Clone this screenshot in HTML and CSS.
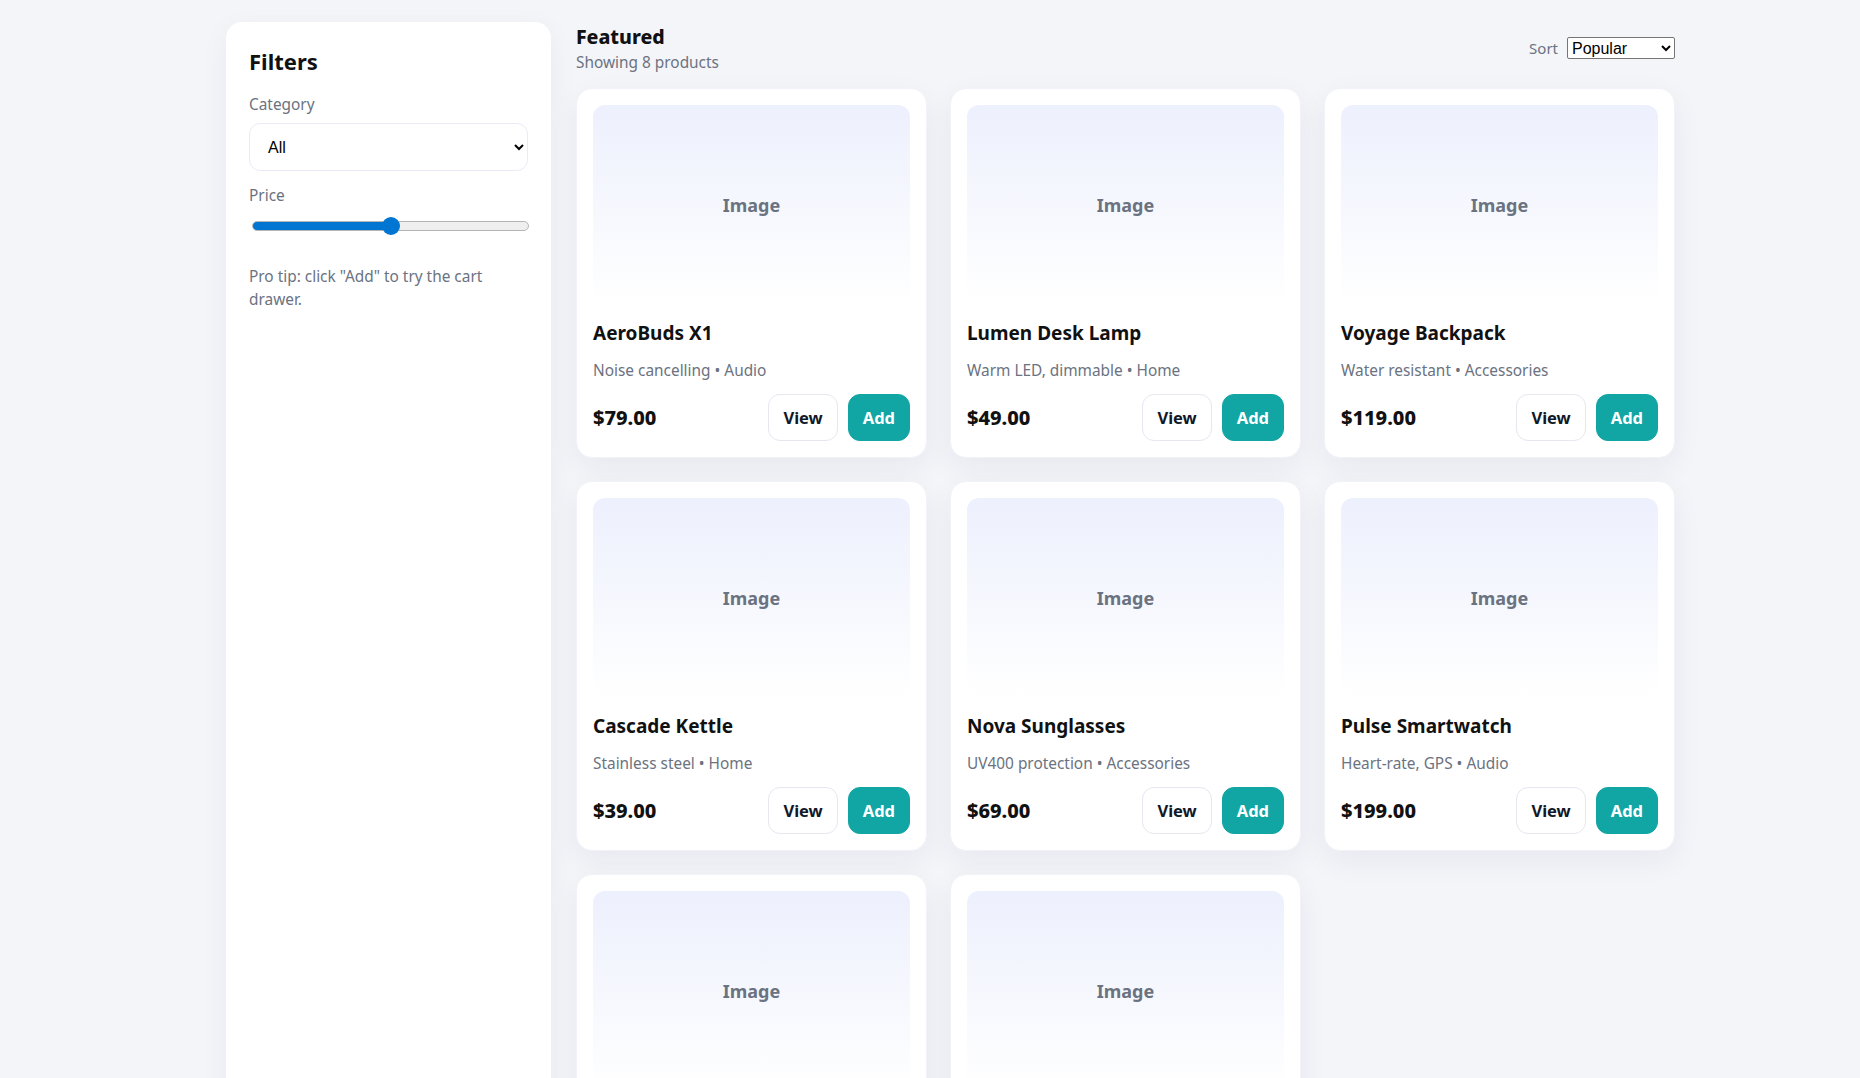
FILE: index.html
```html
<!DOCTYPE html>
<html lang="en">
<head>
<meta charset="utf-8">
<title>Featured products</title>
<link rel="stylesheet" href="styles.css">
</head>
<body>
<div class="page">
  <aside class="filters">
    <h2 class="filters-title">Filters</h2>
    <label class="field-label" for="cat">Category</label>
    <select id="cat" class="cat-select"><option>All</option><option>Audio</option><option>Home</option><option>Accessories</option></select>
    <label class="field-label" for="price">Price</label>
    <input id="price" class="price-range" type="range" min="0" max="100" value="50">
    <p class="tip">Pro tip: click "Add" to try the cart drawer.</p>
  </aside>
  <main class="main">
    <div class="bar">
      <div class="bar-text">
        <h1 class="bar-title">Featured</h1>
        <div class="bar-sub">Showing 8 products</div>
      </div>
      <div class="sort">
        <span class="sort-label">Sort</span>
        <select class="sort-select"><option>Popular</option><option>Newest</option><option>Price</option></select>
      </div>
    </div>
    <div class="grid">
      <article class="card">
        <div class="thumb">Image</div>
        <h3 class="name">AeroBuds X1</h3>
        <p class="meta">Noise cancelling • Audio</p>
        <div class="foot"><span class="price">$79.00</span><div class="actions"><button class="btn btn-view">View</button><button class="btn btn-add">Add</button></div></div>
      </article>
      <article class="card">
        <div class="thumb">Image</div>
        <h3 class="name">Lumen Desk Lamp</h3>
        <p class="meta">Warm LED, dimmable • Home</p>
        <div class="foot"><span class="price">$49.00</span><div class="actions"><button class="btn btn-view">View</button><button class="btn btn-add">Add</button></div></div>
      </article>
      <article class="card">
        <div class="thumb">Image</div>
        <h3 class="name">Voyage Backpack</h3>
        <p class="meta">Water resistant • Accessories</p>
        <div class="foot"><span class="price">$119.00</span><div class="actions"><button class="btn btn-view">View</button><button class="btn btn-add">Add</button></div></div>
      </article>
      <article class="card">
        <div class="thumb">Image</div>
        <h3 class="name">Cascade Kettle</h3>
        <p class="meta">Stainless steel • Home</p>
        <div class="foot"><span class="price">$39.00</span><div class="actions"><button class="btn btn-view">View</button><button class="btn btn-add">Add</button></div></div>
      </article>
      <article class="card">
        <div class="thumb">Image</div>
        <h3 class="name">Nova Sunglasses</h3>
        <p class="meta">UV400 protection • Accessories</p>
        <div class="foot"><span class="price">$69.00</span><div class="actions"><button class="btn btn-view">View</button><button class="btn btn-add">Add</button></div></div>
      </article>
      <article class="card">
        <div class="thumb">Image</div>
        <h3 class="name">Pulse Smartwatch</h3>
        <p class="meta">Heart-rate, GPS • Audio</p>
        <div class="foot"><span class="price">$199.00</span><div class="actions"><button class="btn btn-view">View</button><button class="btn btn-add">Add</button></div></div>
      </article>
      <article class="card">
        <div class="thumb">Image</div>
        <h3 class="name">Terra Planter</h3>
        <p class="meta">Ceramic, drainage • Home</p>
        <div class="foot"><span class="price">$29.00</span><div class="actions"><button class="btn btn-view">View</button><button class="btn btn-add">Add</button></div></div>
      </article>
      <article class="card">
        <div class="thumb">Image</div>
        <h3 class="name">Echo Speaker</h3>
        <p class="meta">Bluetooth 5.3 • Audio</p>
        <div class="foot"><span class="price">$89.00</span><div class="actions"><button class="btn btn-view">View</button><button class="btn btn-add">Add</button></div></div>
      </article>
    </div>
  </main>
</div>
</body>
</html>
```
FILE: styles.css
```css
* { box-sizing: border-box; }
html, body { margin: 0; padding: 0; }
body {
  background: #f4f5f9;
  font-family: "Noto Sans", "Open Sans", sans-serif;
  color: #111;
}
.page {
  display: grid;
  grid-template-columns: 325px 1fr;
  gap: 25px;
  padding: 22px 185px 40px 226px;
}
.filters {
  background: #fff;
  border-radius: 16px;
  padding: 24px 23px;
  box-shadow: 0 8px 30px rgba(20, 30, 60, 0.05);
}
.filters-title {
  margin: 0 0 18px;
  font-size: 22px;
  line-height: 30px;
  font-weight: 700;
}
.field-label {
  display: block;
  font-size: 15.4px;
  line-height: 22px;
  color: #6b7280;
  margin-bottom: 7px;
}
.cat-select {
  display: block;
  width: 100%;
  height: 48px;
  border: 1px solid #ebebf7;
  border-radius: 11px;
  background: #fff;
  padding: 0 12px 0 14px;
  font-family: "Liberation Sans", Arial, sans-serif;
  font-size: 16px;
  color: #000;
  margin-bottom: 14px;
}
.price-range {
  -webkit-appearance: none;
  appearance: none;
  display: block;
  width: calc(100% - 2px);
  height: 18px;
  margin: 10px 0 0 3px;
  background: transparent;
}
.price-range::-webkit-slider-runnable-track {
  height: 10px;
  border-radius: 5px;
  border: 1px solid #b5b5b5;
  background: linear-gradient(90deg, #0075d2 0 50%, #efefef 50% 100%);
}
.price-range::-webkit-slider-thumb {
  -webkit-appearance: none;
  appearance: none;
  width: 18px;
  height: 18px;
  margin-top: -5px;
  border-radius: 50%;
  border: 0;
  background: #0075d2;
}
.tip {
  margin: 30px 0 0;
  font-size: 15.4px;
  line-height: 23px;
  color: #6b7280;
}
.main { min-width: 0; }
.bar {
  display: flex;
  align-items: center;
  justify-content: space-between;
  padding-top: 3px;
  margin-bottom: 13px;
}
.bar-title {
  margin: 0;
  font-size: 19.5px;
  line-height: 24px;
  font-weight: 800;
}
.bar-sub {
  margin-top: 2px;
  font-size: 15.4px;
  line-height: 24px;
  color: #6b7280;
}
.sort { display: flex; align-items: center; gap: 9px; margin-bottom: 4px; }
.sort-label { font-size: 15px; color: #6b7280; }
.sort-select {
  width: 108px;
  height: 22px;
  font-family: "Liberation Sans", Arial, sans-serif;
  font-size: 16px;
  color: #000;
  background: #fff;
  border: 1px solid #767676;
  border-radius: 2px;
}
.grid {
  display: grid;
  grid-template-columns: repeat(3, 1fr);
  gap: 23px;
}
.card {
  background: #fff;
  border: 1px solid #f2f3f8;
  border-radius: 16px;
  padding: 16px;
  box-shadow: 0 10px 30px rgba(20, 30, 60, 0.06);
}
.thumb {
  height: 200px;
  border-radius: 12px;
  background: linear-gradient(180deg, #edf0fd 0%, #ffffff 100%);
  display: flex;
  align-items: center;
  justify-content: center;
  font-size: 18px;
  font-weight: 700;
  color: #6b7280;
}
.name {
  margin: 15px 0 0;
  font-size: 19px;
  line-height: 26px;
  font-weight: 700;
}
.meta {
  margin: 14px 0 0;
  font-size: 15.4px;
  line-height: 22px;
  color: #6b7280;
}
.foot {
  margin-top: 12px;
  display: flex;
  align-items: center;
  justify-content: space-between;
}
.price {
  font-size: 20px;
  font-weight: 800;
}
.actions { display: flex; gap: 10px; }
.btn {
  height: 47px;
  padding: 0 14px;
  border-radius: 12px;
  font-family: inherit;
  font-size: 16.5px;
  font-weight: 700;
  cursor: pointer;
}
.btn-view {
  background: #fff;
  border: 1px solid #e6e7f0;
  color: #111827;
}
.btn-add {
  background: #11a5a3;
  border: 1px solid #11a5a3;
  color: #fff;
}
```
